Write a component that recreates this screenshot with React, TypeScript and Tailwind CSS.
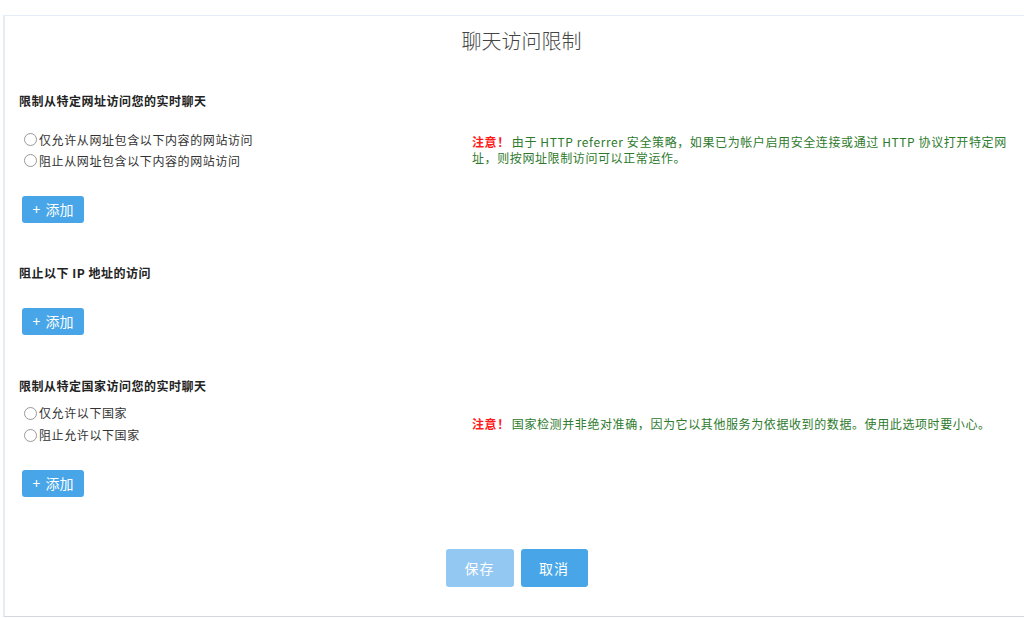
import React from "react";

// Chat access restriction settings panel

const font = { fontFamily: '"Noto Sans CJK SC", "Noto Sans", sans-serif' };

function Radio({ label }: { label: string }) {
  return (
    <label className="flex h-[21px] items-center gap-[2px] pl-[5px] text-[12px] tracking-[0.6px] text-[#333]">
      <span className="h-[13px] w-[13px] rounded-full border border-[#999] bg-white" />
      <span>{label}</span>
    </label>
  );
}

function AddBtn({ className = "" }: { className?: string }) {
  return (
    <button
      className={`flex h-[27px] w-[62px] items-center justify-center gap-[5px] rounded-[3px] bg-[#48a6e8] text-[14px] text-white ${className}`}
    >
      <span>+</span>
      <span>添加</span>
    </button>
  );
}

function Notice({ children }: { children: React.ReactNode }) {
  return (
    <div className="w-[536px] text-[12px] leading-[16px] tracking-[0.6px] text-[#2d7a2d]">
      <span className="mr-[2px] font-bold text-[#ff1a1a]">注意！</span>
      {children}
    </div>
  );
}

function Heading({ children, className = "" }: { children: React.ReactNode; className?: string }) {
  return (
    <h2 className={`text-[12px] font-bold leading-[16px] tracking-[0.5px] text-[#222] ${className}`}>{children}</h2>
  );
}

export default function App() {
  return (
    <div className="h-[618px] w-[1024px] overflow-hidden bg-white" style={font}>
      <div className="ml-[3px] mt-[15px] h-[602px] border-b border-l-2 border-t border-b-[#d4d7de] border-l-[#e3ecf7] border-t-[#e3ecf7] pl-[14px]">
        <h1 className="pt-[11px] text-center text-[20px] font-light leading-[28px] text-[#444]">聊天访问限制</h1>

        <Heading className="mt-[38px]">限制从特定网址访问您的实时聊天</Heading>
        <div className="mt-[20px] flex items-center">
          <div className="w-[453px]">
            <Radio label="仅允许从网址包含以下内容的网站访问" />
            <Radio label="阻止从网址包含以下内容的网站访问" />
          </div>
          <Notice>
            由于 HTTP referrer 安全策略，如果已为帐户启用安全连接或通过 HTTP 协议打开特定网址，则按网址限制访问可以正常运作。
          </Notice>
        </div>
        <AddBtn className="ml-[3px] mt-[25px]" />

        <Heading className="mt-[42px]">阻止以下 IP 地址的访问</Heading>
        <AddBtn className="ml-[3px] mt-[27px]" />

        <Heading className="mt-[43px]">限制从特定国家访问您的实时聊天</Heading>
        <div className="mt-[8px] flex items-center">
          <div className="w-[453px]">
            <div className="flex h-[22px] items-center"><Radio label="仅允许以下国家" /></div>
            <div className="flex h-[22px] items-center"><Radio label="阻止允许以下国家" /></div>
          </div>
          <Notice>国家检测并非绝对准确，因为它以其他服务为依据收到的数据。使用此选项时要小心。</Notice>
        </div>
        <AddBtn className="ml-[3px] mt-[24px]" />

        <div className="mt-[52px] flex justify-center gap-[7px] pr-[10px]">
          <button className="h-[38px] w-[68px] rounded-[3px] bg-[#93c8f2] text-[14px] tracking-[1px] text-white">保存</button>
          <button className="h-[38px] w-[67px] rounded-[3px] bg-[#48a6e8] text-[14px] tracking-[1px] text-white">取消</button>
        </div>
      </div>
    </div>
  );
}
